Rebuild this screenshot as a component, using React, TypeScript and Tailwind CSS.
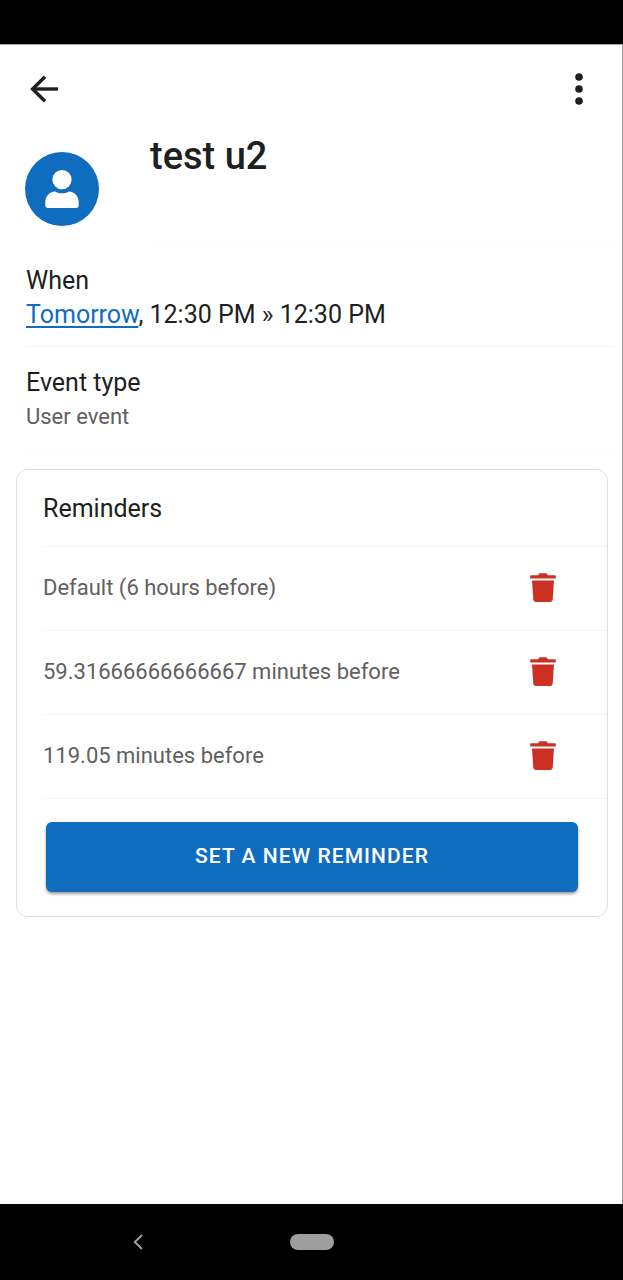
import React, { useState } from 'react';

interface Reminder {
  id: number;
  label: string;
}

const initialReminders: Reminder[] = [
  { id: 1, label: 'Default (6 hours before)' },
  { id: 2, label: '59.31666666666667 minutes before' },
  { id: 3, label: '119.05 minutes before' },
];

function TrashIcon() {
  return (
    <svg viewBox="0 0 26 30" className="w-[26px] h-[30px]" fill="currentColor" aria-hidden="true">
      <path d="M0.8 2.2H8.2C8.6 0.9 9.4 0.3 10.6 0.3H15.4C16.6 0.3 17.4 0.9 17.8 2.2H25.2C25.6 2.2 25.8 2.4 25.8 2.8V5.4H0.2V2.8C0.2 2.4 0.4 2.2 0.8 2.2Z" />
      <path d="M2 7.4H24L22.7 26.6C22.6 28.2 21.6 29 20.2 29H5.8C4.4 29 3.4 28.2 3.3 26.6Z" />
    </svg>
  );
}

function Header() {
  return (
    <header className="flex items-center justify-between h-[89px] pb-0.5 pl-[25px] pr-[23px]">
      <button type="button" aria-label="Back" className="flex items-center justify-center w-[38px] h-10">
        <svg viewBox="0 0 28 28" className="w-7 h-7" fill="none" stroke="currentColor" strokeWidth="3.4" aria-hidden="true">
          <path d="M15 1.8L2.6 14L15 26.2" />
          <path d="M2.6 14H28" />
        </svg>
      </button>
      <button type="button" aria-label="More options" className="flex items-center justify-center w-10 h-10">
        <svg viewBox="0 0 10 32" className="w-[10px] h-8" fill="currentColor" aria-hidden="true">
          <circle cx="5" cy="4" r="3.8" />
          <circle cx="5" cy="16" r="3.8" />
          <circle cx="5" cy="28" r="3.8" />
        </svg>
      </button>
    </header>
  );
}

function Avatar() {
  return (
    <div className="flex items-center justify-center shrink-0 w-[74px] h-[74px] rounded-full bg-[#106cbf] text-white">
      <svg viewBox="0 0 34 38" className="w-[34px] h-[38px]" fill="currentColor" aria-hidden="true">
        <circle cx="17" cy="9.6" r="9.6" />
        <path d="M3 38C1.2 38 0.3 37 0.3 35.2V32C0.3 26 4.5 21.6 10.2 21.4C12 22.6 14.4 23.3 17 23.3C19.6 23.3 22 22.6 23.8 21.4C29.5 21.6 33.7 26 33.7 32V35.2C33.7 37 32.8 38 31 38Z" />
      </svg>
    </div>
  );
}

export default function App() {
  const [reminders, setReminders] = useState(initialReminders);

  const removeReminder = (id: number) => {
    setReminders(reminders.filter(reminder => reminder.id !== id));
  };

  return (
    <div className="min-h-screen flex flex-col bg-white text-[#1d1f21] font-[Roboto,'Liberation_Sans',sans-serif]">
      {/* Status bar */}
      <div className="h-11 bg-black" />

      <main className="flex-1 border-t border-r border-[#a3a3a3]">
        <Header />

        <section className="flex items-center h-[110px] pl-[25px]">
          <Avatar />
          <div className="flex-1 self-stretch ml-[51px] mr-2 border-b border-[#fcfcfc]">
            <h1 className="text-[38px] leading-[44px] font-medium">test u2</h1>
          </div>
        </section>

        <section className="ml-[26px] mr-2 pt-5 pb-[14px] border-b border-[#f7f7f7] text-[25px] leading-[34px]">
          <h2>When</h2>
          <p>
            <a href="#tomorrow" className="text-[#106cbf] underline underline-offset-3">Tomorrow</a>, 12:30 PM » 12:30 PM
          </p>
        </section>

        <section className="ml-[26px] mr-2 pt-[19px] pb-[19px] border-b border-[#fcfcfc]">
          <h2 className="text-[25px] leading-[34px]">Event type</h2>
          <p className="text-[22px] leading-[34px] text-[#606060]">User event</p>
        </section>

        {/* Reminders */}
        <section className="mt-[15px] ml-4 mr-[14px] border border-[#dedede] rounded-xl">
          <h2 className="ml-[26px] pt-[22px] pb-5 border-b border-[#f7f7f7] text-[25px] leading-[34px]">Reminders</h2>
          <ul>
            {reminders.map(reminder => (
              <li
                key={reminder.id}
                className="flex items-center justify-between h-[84px] ml-[26px] pb-0.5 pr-11 border-b border-[#f7f7f7]"
              >
                <span className="text-[22px] leading-[34px] text-[#606060]">{reminder.label}</span>
                <button
                  type="button"
                  aria-label={`Delete ${reminder.label}`}
                  onClick={() => removeReminder(reminder.id)}
                  className="flex items-center justify-center w-10 h-10 text-[#cb3022]"
                >
                  <TrashIcon />
                </button>
              </li>
            ))}
          </ul>
          <div className="flex pt-[23px] pb-6 px-[29px]">
            <button
              type="button"
              className="flex-1 h-[70px] rounded-md bg-[#106cbf] text-white text-[21px] font-medium uppercase tracking-wider shadow-[0_2px_3px_rgba(0,0,0,0.4)]"
            >
              Set a new reminder
            </button>
          </div>
        </section>
      </main>

      {/* System navigation */}
      <nav className="grid grid-cols-[1fr_auto_1fr] items-center h-[76px] bg-black text-[#9e9e9e]">
        <div className="flex justify-center pr-[14px]">
          <button type="button" aria-label="System back" className="flex items-center justify-center w-10 h-10">
            <svg viewBox="0 0 10 16" className="w-[10px] h-4" fill="none" stroke="currentColor" strokeWidth="2" aria-hidden="true">
              <path d="M9 1L1.8 8L9 15" />
            </svg>
          </button>
        </div>
        <button type="button" aria-label="Home" className="w-11 h-4 rounded-full bg-[#9e9e9e]" />
      </nav>
    </div>
  );
}
